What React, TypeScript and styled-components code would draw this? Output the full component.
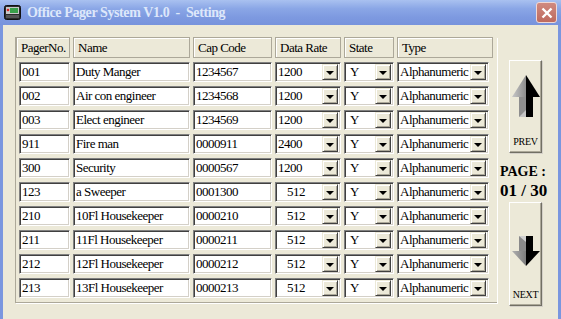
import styled, { createGlobalStyle } from 'styled-components';

const GlobalStyle = createGlobalStyle`
  html, body {
    margin: 0;
    padding: 0;
    background: #ece9d8;
  }
`;

type Pager = {
  no: string;
  name: string;
  cap: string;
  rate: string;
};

const pagers: Pager[] = [
  { no: '001', name: 'Duty Manger', cap: '1234567', rate: '1200' },
  { no: '002', name: 'Air con engineer', cap: '1234568', rate: '1200' },
  { no: '003', name: 'Elect engineer', cap: '1234569', rate: '1200' },
  { no: '911', name: 'Fire man', cap: '0000911', rate: '2400' },
  { no: '300', name: 'Security', cap: '0000567', rate: '1200' },
  { no: '123', name: 'a Sweeper', cap: '0001300', rate: '512' },
  { no: '210', name: '10Fl Housekeeper', cap: '0000210', rate: '512' },
  { no: '211', name: '11Fl Housekeeper', cap: '0000211', rate: '512' },
  { no: '212', name: '12Fl Housekeeper', cap: '0000212', rate: '512' },
  { no: '213', name: '13Fl Housekeeper', cap: '0000213', rate: '512' },
];

const PagerIcon = () => (
  <svg width='17' height='15' viewBox='0 0 17 15'>
    <rect x='0.5' y='0.5' width='16' height='14' rx='2' fill='#2a2a2a' stroke='#111' />
    <rect x='2' y='2' width='13' height='7' fill='#c8c8c8' />
    <rect x='6' y='3' width='8' height='5' fill='#3aa04a' />
    <circle cx='4' cy='5' r='1.3' fill='#d22' />
    <rect x='2' y='10' width='13' height='3' fill='#555' />
  </svg>
);

const UpArrow = () => (
  <svg width='28' height='42' viewBox='0 0 28 42'>
    <defs>
      <linearGradient id='upg' x1='0' y1='0' x2='1' y2='0'>
        <stop offset='0' stopColor='#c8c8c8' />
        <stop offset='1' stopColor='#8c8c8c' />
      </linearGradient>
    </defs>
    <polygon points='14,0 0,22 14,22' fill='url(#upg)' />
    <polygon points='14,0 28,22 14,22' fill='#000' />
    <rect x='7' y='22' width='7' height='20' fill='#8e8e8e' />
    <polygon points='7,42 14,35 14,42' fill='#c4c4c4' />
    <rect x='14' y='22' width='7' height='20' fill='#000' />
  </svg>
);

const DownArrow = () => (
  <svg width='28' height='30' viewBox='0 0 28 30'>
    <defs>
      <linearGradient id='dng' x1='0' y1='0' x2='1' y2='0'>
        <stop offset='0' stopColor='#b0b0b0' />
        <stop offset='1' stopColor='#7c7c7c' />
      </linearGradient>
    </defs>
    <rect x='7' y='0' width='7' height='15' fill='#8a8a8a' />
    <polygon points='7,0 14,0 14,6' fill='#d0d0d0' />
    <rect x='14' y='0' width='7' height='15' fill='#000' />
    <polygon points='0,15 14,15 14,30' fill='url(#dng)' />
    <polygon points='14,15 28,15 14,30' fill='#000' />
  </svg>
);

const App = () => {
  return (
    <Window>
      <GlobalStyle />
      <TitleBar>
        <PagerIcon />
        <Title>Office Pager System V1.0&nbsp; - &nbsp;Setting</Title>
        <CloseButton>
          <svg width='12' height='12' viewBox='0 0 12 12'>
            <path d='M1.5 1.5 L10.5 10.5 M10.5 1.5 L1.5 10.5' stroke='#fff' strokeWidth='2.4' />
          </svg>
        </CloseButton>
      </TitleBar>
      <Body>
        <Frame>
          <Grid>
            <HeadCell>PagerNo.</HeadCell>
            <HeadCell>Name</HeadCell>
            <HeadCell>Cap Code</HeadCell>
            <HeadCell>Data Rate</HeadCell>
            <HeadCell>State</HeadCell>
            <HeadCell>Type</HeadCell>
            {pagers.map((p) => (
              <Row key={p.no}>
                <Field $inset>{p.no}</Field>
                <Field>{p.name}</Field>
                <Field>{p.cap}</Field>
                <Combo>
                  <ComboText $indent={p.rate.length < 4 ? 9 : 0}>{p.rate}</ComboText>
                  <DropButton />
                </Combo>
                <Combo>
                  <ComboText $indent={3}>Y</ComboText>
                  <DropButton />
                </Combo>
                <Combo $width={92}>
                  <ComboText>Alphanumeric</ComboText>
                  <DropButton />
                </Combo>
              </Row>
            ))}
          </Grid>
        </Frame>
        <SidePanel>
          <NavButton $height={93}>
            <ArrowSlot $top={15}>
              <UpArrow />
            </ArrowSlot>
            <NavLabel>PREV</NavLabel>
          </NavButton>
          <PageInfo>
            <PageLabel>PAGE :</PageLabel>
            <PageNumber>01 / 30</PageNumber>
          </PageInfo>
          <NavButton $height={104}>
            <ArrowSlot $top={34}>
              <DownArrow />
            </ArrowSlot>
            <NavLabel>NEXT</NavLabel>
          </NavButton>
        </SidePanel>
      </Body>
    </Window>
  );
};

export default App;

const Window = styled.div`
  width: 561px;
  height: 319px;
  display: flex;
  flex-direction: column;
  overflow: hidden;
  background: #ece9d8;
  font-family: 'Liberation Serif', 'Times New Roman', serif;
`;

const TitleBar = styled.div`
  height: 25px;
  flex: none;
  display: flex;
  align-items: center;
  gap: 6px;
  padding: 0 4px 0 4px;
  background: linear-gradient(to bottom, #a9c1f0 0%, #8aa6e6 35%, #7d99e0 70%, #7793dc 100%);
`;

const Title = styled.div`
  flex: 1;
  color: #dde7fa;
  font-family: 'Liberation Serif', serif;
  font-weight: bold;
  font-size: 14px;
  letter-spacing: -0.4px;
  white-space: pre;
  padding-top: 1px;
`;

const CloseButton = styled.div`
  width: 19px;
  height: 19px;
  border: 1px solid #f0d8d4;
  border-radius: 3px;
  background: linear-gradient(to bottom, #d08a80, #be6a5e);
  display: flex;
  align-items: center;
  justify-content: center;
`;

const Body = styled.div`
  flex: 1;
  display: flex;
  border-left: 3px solid #7a96df;
  border-right: 3px solid #7a96df;
  padding: 12px 0 0 12px;
`;

const Frame = styled.div`
  width: 482px;
  height: 266px;
  border-left: 1px solid #aca899;
  border-bottom: 1px solid #aca899;
  box-shadow: 1px 1px 0 #fff;
  box-sizing: border-box;
`;

const Grid = styled.div`
  display: grid;
  grid-template-columns: 54px 117px 79px 66px 50px 96px;
  column-gap: 3px;
  row-gap: 4px;
  grid-auto-rows: 20px;
  grid-template-rows: 21px;
  font-size: 13px;
  letter-spacing: -0.5px;
`;

const HeadCell = styled.div`
  box-sizing: border-box;
  height: 21px;
  border: 1px solid #aca899;
  box-shadow: inset 1px 1px 0 #fff;
  line-height: 19px;
  padding-left: 4px;
  color: #000;
  margin-bottom: 3px;
  white-space: nowrap;
`;

const Row = styled.div`
  display: contents;
`;

const Field = styled.div<{ $inset?: boolean }>`
  box-sizing: border-box;
  height: 20px;
  margin-left: ${({ $inset }) => ($inset ? '3px' : '0')};
  background: #fff;
  border: 1px solid;
  border-color: #808080 #fff #fff #808080;
  box-shadow: inset 1px 1px 0 #404040, inset -1px -1px 0 #d4d0c8;
  line-height: 18px;
  padding-left: 2px;
  color: #000;
  white-space: pre;
  overflow: hidden;
`;

const Combo = styled(Field)<{ $width?: number }>`
  display: flex;
  align-items: center;
  justify-content: space-between;
  padding: 0 2px 0 2px;
  width: ${({ $width }) => ($width ? `${$width}px` : 'auto')};
`;

const ComboText = styled.span<{ $indent?: number }>`
  white-space: pre;
  line-height: 16px;
  padding-left: ${({ $indent }) => $indent || 0}px;
`;

const DropButton = styled.span`
  flex: none;
  width: 16px;
  height: 16px;
  box-sizing: border-box;
  background: #ece9d8;
  border: 1px solid;
  border-color: #ece9d8 #404040 #404040 #ece9d8;
  box-shadow: inset 1px 1px 0 #fff, inset -1px -1px 0 #aca899;
  position: relative;
  &::after {
    content: '';
    position: absolute;
    left: 3px;
    top: 6px;
    border-left: 4px solid transparent;
    border-right: 4px solid transparent;
    border-top: 4px solid #000;
  }
`;

const SidePanel = styled.div`
  width: 58px;
  display: flex;
  flex-direction: column;
  align-items: flex-start;
  padding-top: 23px;
  padding-left: 12px;
  box-sizing: border-box;
`;

const NavButton = styled.div<{ $height: number }>`
  position: relative;
  width: 33px;
  height: ${({ $height }) => $height}px;
  box-sizing: border-box;
  background: #ece9d8;
  border: 1px solid;
  border-color: #fff #716f64 #716f64 #fff;
  box-shadow: inset -1px -1px 0 #aca899, 1px 1px 0 #d4d0c8;
  display: flex;
  flex-direction: column;
  align-items: center;
`;

const ArrowSlot = styled.div<{ $top: number }>`
  margin-top: ${({ $top }) => $top - 1}px;
  flex: 1;
  svg {
    display: block;
  }
`;

const NavLabel = styled.div`
  font-size: 10px;
  line-height: 10px;
  margin-bottom: 5px;
  color: #000;
  letter-spacing: -0.3px;
`;

const PageInfo = styled.div`
  margin: 11px 0 0 -9px;
  height: 38px;
  display: flex;
  flex-direction: column;
  color: #000;
  font-weight: bold;
  white-space: nowrap;
`;

const PageLabel = styled.div`
  font-size: 14px;
  line-height: 16px;
`;

const PageNumber = styled.div`
  font-size: 17px;
  line-height: 22px;
`;
